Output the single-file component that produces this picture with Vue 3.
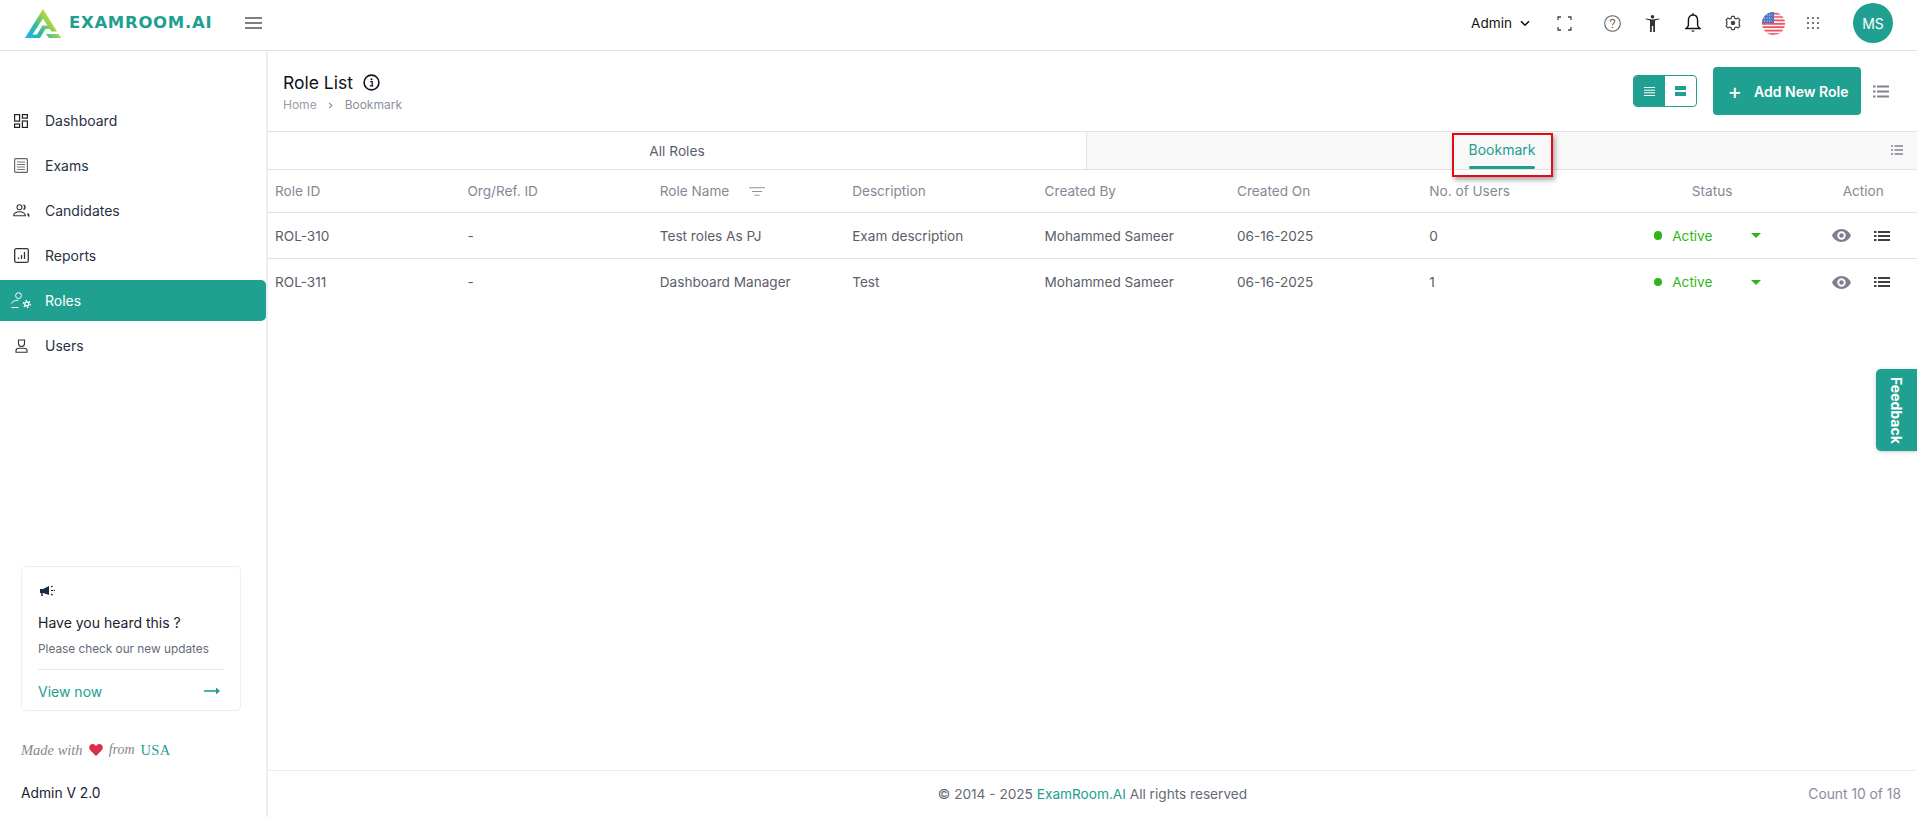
<script setup>
const cols = ['Role ID', 'Org/Ref. ID', 'Role Name', 'Description', 'Created By', 'Created On', 'No. of Users']
const rows = [
  ['ROL-310', '-', 'Test roles As PJ', 'Exam description', 'Mohammed Sameer', '06-16-2025', '0'],
  ['ROL-311', '-', 'Dashboard Manager', 'Test', 'Mohammed Sameer', '06-16-2025', '1'],
]
const nav = ['Dashboard', 'Exams', 'Candidates', 'Reports', 'Roles', 'Users']
</script>

<template>
  <div class="page">
    <header class="top">
      <div class="brand">
        <svg class="logo" width="36" height="29" viewBox="0 0 36 29">
          <defs>
            <linearGradient id="lg" gradientUnits="userSpaceOnUse" x1="2" y1="29" x2="30" y2="8">
              <stop offset="0" stop-color="#1fb5e6" />
              <stop offset="0.4" stop-color="#2db9a0" />
              <stop offset="0.85" stop-color="#b9d93a" />
            </linearGradient>
          </defs>
          <path fill="url(#lg)" d="M18 0 32 22.500H26.500L18 9.500 7.500 25.500H12L17.500 16.500H24L26.500 20H20.500L15 29H0Z" />
          <path fill="url(#lg)" d="M21 25H33.500L36 29H24Z" />
        </svg>
        <span class="wordmark">EXAMROOM.AI</span>
      </div>
      <svg class="burger" width="17" height="12" viewBox="0 0 17 12"><path d="M0 1H17M0 6H17M0 11H17" stroke="#555" stroke-width="1.500" /></svg>
      <div class="spacer"></div>
      <div class="tools">
        <span class="admin">Admin</span>
        <svg class="chev" width="10" height="7" viewBox="0 0 10 7"><path d="M1 1.200 5 5.200 9 1.200" fill="none" stroke="#111" stroke-width="1.600" /></svg>
        <svg class="t-full" width="15" height="15" viewBox="0 0 15 15"><path d="M1 4V1H4M11 1H14V4M14 11V14H11M4 14H1V11" fill="none" stroke="#444" stroke-width="1.300" /></svg>
        <svg class="t-help" width="17" height="17" viewBox="0 0 17 17"><circle cx="8.500" cy="8.500" r="7.800" fill="none" stroke="#5a5f6b" stroke-width="1.100" /><path d="M6.200 6.600C6.300 5.200 7.300 4.400 8.500 4.400 9.900 4.400 10.800 5.300 10.800 6.500 10.800 8 8.500 8.200 8.500 10.200" fill="none" stroke="#8a6d4b" stroke-width="1.100" /><circle cx="8.500" cy="12.500" r=".8" fill="#8a6d4b" /></svg>
        <svg class="t-access" width="15" height="17" viewBox="0 0 15 17"><circle cx="7.500" cy="1.800" r="1.800" fill="#333" /><path d="M.5 4.200 5 5.600V17H6.800V11H8.200V17H10V5.600L14.500 4.200 14.200 3.400 7.500 4.500 .8 3.400Z" fill="#333" /></svg>
        <svg class="t-bell" width="16" height="20" viewBox="0 0 16 20"><path d="M8 2C4.700 2 3.400 4.500 3.400 7.500V12C3.400 13.500 2.300 14.600 1 15.500H15C13.700 14.600 12.600 13.500 12.600 12V7.500C12.600 4.500 11.300 2 8 2Z" fill="none" stroke="#111" stroke-width="1.400" /><path d="M8 .3V2" stroke="#111" stroke-width="1.400" /><path d="M6.300 17.500H9.700A1.800 1.800 0 0 1 6.300 17.500Z" fill="#111" /></svg>
        <svg class="t-gear" width="16" height="16" viewBox="0 0 24 24"><path fill="none" stroke="#444" stroke-width="1.800" stroke-linejoin="round" d="M10 2h4l.7 3 2.200 1 2.700-1.500 2.800 2.800L20.900 10l.9 2-.9 2 1.500 2.700-2.800 2.800L17 18l-2.300 1-.7 3h-4l-.7-3L7 18l-2.600 1.500-2.800-2.800L3.100 14l-.9-2 .9-2L1.600 7.300l2.800-2.800L7 6l2.300-1z" /><circle cx="12" cy="12" r="3.400" fill="#444" /></svg>
        <svg class="t-flag" width="23" height="23" viewBox="0 0 23 23">
          <defs><clipPath id="fc"><circle cx="11.500" cy="11.500" r="11.500" /></clipPath></defs>
          <g clip-path="url(#fc)">
            <rect width="23" height="23" fill="#f4f4f6" />
            <path d="M0 1.600H23M0 5H23M0 8.400H23M0 11.800H23M0 15.200H23M0 18.600H23M0 22H23" stroke="#ef5360" stroke-width="1.700" />
            <rect width="12" height="11" fill="#4a76c9" />
            <path d="M2 3h8M2 6h8M2 9h8" stroke="#dfe8fa" stroke-width="1" stroke-dasharray="1 1.500" />
          </g>
        </svg>
        <svg class="t-grid" width="14" height="14" viewBox="0 0 14 14"><g fill="#555"><circle cx="2" cy="2" r="1.100" /><circle cx="7" cy="2" r="1.100" /><circle cx="12" cy="2" r="1.100" /><circle cx="2" cy="7" r="1.100" /><circle cx="7" cy="7" r="1.100" /><circle cx="12" cy="7" r="1.100" /><circle cx="2" cy="12" r="1.100" /><circle cx="7" cy="12" r="1.100" /><circle cx="12" cy="12" r="1.100" /></g></svg>
        <div class="avatar">MS</div>
      </div>
    </header>

    <div class="body">
      <aside class="side">
        <nav class="nav">
          <div v-for="n in nav" :key="n" class="nav-item" :class="{ on: n === 'Roles' }">
            <span class="nav-ic">
              <svg v-if="n === 'Dashboard'" width="14" height="14" viewBox="0 0 14 14" fill="none" stroke="#222" stroke-width="1.200"><rect x=".6" y=".6" width="5" height="6.500" /><rect x="8.400" y=".6" width="5" height="3.500" /><rect x=".6" y="10" width="5" height="3.400" /><rect x="8.400" y="7" width="5" height="6.400" /></svg>
              <svg v-else-if="n === 'Exams'" width="14" height="15" viewBox="0 0 14 15" fill="none" stroke="#666"><rect x=".6" y=".6" width="12.800" height="13.800" rx="1" stroke-width="1.200" /><path d="M3 4H11M3 6.500H11M3 9H11M3 11.500H11" stroke-width=".9" /></svg>
              <svg v-else-if="n === 'Candidates'" width="17" height="13" viewBox="0 0 17 13" fill="none" stroke="#333" stroke-width="1.100"><circle cx="6.500" cy="3.200" r="2.500" /><path d="M10.500 .9A2.500 2.500 0 0 1 10.500 5.500" stroke-width="1.500" /><path d="M.7 11.800C.7 8.500 3.500 7.700 6.500 7.700S12 9 12.500 11.800Z" /><path d="M14.800 9.500 16 12.500" stroke-width="1.800" /></svg>
              <svg v-else-if="n === 'Reports'" width="15" height="15" viewBox="0 0 15 15" fill="none" stroke="#333"><rect x=".7" y=".7" width="13.600" height="13.600" rx="1.500" stroke-width="1.300" /><path d="M4.500 11V9.500M7.500 11V7M10.500 11V4" stroke-width="1.300" /></svg>
              <svg v-else-if="n === 'Roles'" width="20" height="17" viewBox="0 0 20 17" fill="none" stroke="#fff"><circle cx="7.500" cy="3.600" r="2.900" stroke-width="1" /><path d="M.5 11.500C1 9.500 3.500 8.500 7.500 8.200M.5 15.500H7.500" stroke-width="1" /><circle cx="15.800" cy="12" r="2" stroke-width="1.300" /><circle cx="15.800" cy="12" r="3.500" stroke-width="1.200" stroke-dasharray="1.500 2.170" /></svg>
              <svg v-else width="13" height="14" viewBox="0 0 13 14" fill="none" stroke="#333" stroke-width="1.100"><path d="M3.500 1H9.500V4.500A3 3 0 0 1 3.500 4.500Z" /><path d="M1 13.300V11.500C1 10 2.500 9.300 4 9.300H9C10.500 9.300 12 10 12 11.500V13.300Z" /></svg>
            </span>
            <span class="nav-tx">{{ n }}</span>
          </div>
        </nav>
        <div class="grow"></div>
        <div class="card">
          <svg class="mega" width="16" height="13" viewBox="0 0 16 13"><path d="M0 4H3L9 1V10L3 8H2.500L3 11H1.500L1 8H0Z" fill="#1d2b45" /><path d="M11 5.500H15M11 2 13 .8M11 9 13 10.500" stroke="#1d2b45" stroke-width="1.200" stroke-dasharray="2 .6" /></svg>
          <div class="c-title">Have you heard this ?</div>
          <div class="c-sub">Please check our new updates</div>
          <div class="c-foot">
            <span class="c-link">View now</span>
            <svg width="16" height="8" viewBox="0 0 16 8"><path d="M0 4H14" stroke="#20a090" stroke-width="1.600" /><path d="M12 .6 16 4 12 7.400Z" fill="#20a090" /></svg>
          </div>
        </div>
        <div class="made">
          <span class="script">Made with</span>
          <svg width="14" height="12" viewBox="0 0 14 12"><path d="M7 12 1 6C-1 3 1 0 3.700 0 5 0 6.300.7 7 2 7.700.7 9 0 10.300 0 13 0 15 3 13 6Z" fill="#d92f47" /></svg>
          <span class="script">from</span>
          <span class="usa">USA</span>
        </div>
        <div class="ver">Admin V 2.0</div>
      </aside>

      <main class="main">
        <section class="head">
          <div class="head-l">
            <div class="title-row">
              <h1 class="title">Role List</h1>
              <svg width="17" height="17" viewBox="0 0 17 17"><circle cx="8.500" cy="8.500" r="7.400" fill="none" stroke="#0d1220" stroke-width="1.600" /><circle cx="8.500" cy="5.300" r="1" fill="#0d1220" /><path d="M7.300 7.600H9.200V11.600H10.200M6.900 11.900H10.200" stroke="#0d1220" stroke-width="1.200" fill="none" /></svg>
            </div>
            <div class="crumb"><span>Home</span><svg width="6" height="7" viewBox="0 0 6 7"><path d="M1 .8 4 3.500 1 6.200" fill="none" stroke="#8b8f9c" stroke-width="1.100" /></svg><span class="c2">Bookmark</span></div>
          </div>
          <div class="head-r">
            <div class="toggle">
              <span class="tg on"><svg width="11" height="9" viewBox="0 0 11 9"><path d="M0 .5H11M0 3.200H11M0 5.800H11M0 8.500H11" stroke="#fff" stroke-width="1" /></svg></span>
              <span class="tg"><svg width="11" height="10" viewBox="0 0 11 10"><rect width="11" height="4" fill="#20a090" /><rect y="6" width="11" height="4" fill="#20a090" /></svg></span>
            </div>
            <button class="add"><span class="plus">+</span>Add New Role</button>
            <svg class="list-ic" width="16" height="13" viewBox="0 0 16 13"><path d="M0 1.500H2.500M4 1.500H16M0 6.500H2.500M4 6.500H16M0 11.500H2.500M4 11.500H16" stroke="#7f8291" stroke-width="1.900" /></svg>
          </div>
        </section>

        <section class="tabs">
          <div class="tab">All Roles</div>
          <div class="tab alt">
            <span class="bm">Bookmark<i class="bm-line"></i></span>
            <svg class="tab-ic" width="12" height="10" viewBox="0 0 12 10"><path d="M0 1H2M3.500 1H12M0 5H2M3.500 5H12M0 9H2M3.500 9H12" stroke="#7f8291" stroke-width="1.500" /></svg>
          </div>
        </section>

        <section class="table">
          <div class="tr th">
            <div v-for="c in cols" :key="c" class="td">{{ c }}
              <svg v-if="c === 'Role Name'" class="filter" width="16" height="9" viewBox="0 0 16 9"><path d="M0 .7H16M3 4.500H13M5.500 8.300H10.500" stroke="#8f93a0" stroke-width="1.100" /></svg>
            </div>
            <div class="td ctr">Status</div>
            <div class="td ctr act-h">Action</div>
          </div>
          <div v-for="r in rows" :key="r[0]" class="tr body-row">
            <div v-for="(v, i) in r" :key="i" class="td">{{ v }}</div>
            <div class="td st">
              <i class="dot"></i><span class="st-tx">Active</span><i class="caret"></i>
            </div>
            <div class="td acts">
              <svg width="19" height="13" viewBox="0 0 19 13"><path fill-rule="evenodd" d="M9.500 0C14 0 17.500 3 19 6.500 17.500 10 14 13 9.500 13S1.500 10 0 6.500C1.500 3 5 0 9.500 0ZM9.500 2.300A4.200 4.200 0 1 0 9.500 10.700 4.200 4.200 0 0 0 9.500 2.300Z" fill="#7d808f" /><circle cx="9.500" cy="6.500" r="2.300" fill="#7d808f" /></svg>
              <svg width="16" height="10" viewBox="0 0 16 10"><path d="M0 1H2.500M4 1H16M0 5H2.500M4 5H16M0 9H2.500M4 9H16" stroke="#000" stroke-width="1.700" /></svg>
            </div>
          </div>
        </section>
        <div class="grow"></div>
        <footer class="foot">
          <div class="f-c">© 2014 - 2025 <span class="teal">ExamRoom.AI</span> All rights reserved</div>
          <div class="f-r">Count 10 of 18</div>
        </footer>
      </main>
    </div>

    <div class="redbox"></div>
    <div class="feedback"><span>Feedback</span></div>
  </div>
</template>

<style>
html, body { margin: 0; padding: 0; background: #fff; }
</style>

<style scoped>
.page { position: relative; width: 1917px; height: 817px; overflow: hidden; font-family: Inter, "Noto Sans", sans-serif; display: flex; flex-direction: column; background: #fff; }
.top { height: 51px; flex: none; display: flex; align-items: center; border-bottom: 1px solid #dde2e8; box-sizing: border-box; padding-bottom: 4px; }
.brand { display: flex; align-items: center; margin-left: 25px; }
.wordmark { margin-left: 8px; width: 140px; color: #1f9f90; font: 700 16.500px/1 "DejaVu Sans", sans-serif; letter-spacing: .7px; white-space: nowrap; }
.burger { margin-left: 36px; }
.spacer { flex: 1; }
.tools { display: flex; align-items: center; height: 100%; }
.admin { font-size: 13.600px; color: #111; margin-right: 8px; }
.chev { margin-right: 27px; }
.t-full { margin-right: 32px; }
.t-help { margin-right: 24px; }
.t-access { margin-right: 25px; }
.t-bell { margin-right: 24px; }
.t-gear { margin-right: 21px; }
.t-flag { margin-right: 21px; }
.t-grid { margin-right: 33px; }
.avatar { width: 40px; height: 40px; border-radius: 50%; background: #20a090; color: #fff; font-size: 14px; display: flex; align-items: center; justify-content: center; margin-right: 24px; }

.body { flex: 1; display: flex; min-height: 0; }
.side { width: 268px; flex: none; box-sizing: border-box; border-right: 2px solid #edeef2; display: flex; flex-direction: column; }
.nav { margin-top: 49px; display: flex; flex-direction: column; gap: 4px; }
.nav-item { height: 41px; display: flex; align-items: center; border-radius: 0 5px 5px 0; color: #2a3145; font-size: 14px; }
.nav-item.on { background: #20a090; color: #fff; }
.nav-ic { width: 42px; margin-right: 3px; flex: none; display: flex; justify-content: center; }
.grow { flex: 1; }
.card { margin-left: 21px; width: 220px; height: 145px; box-sizing: border-box; border: 1px solid #eceef2; border-radius: 5px; padding: 18px 16px 0 16px; }
.mega { display: block; margin-left: 2px; }
.c-title { margin-top: 16px; font-size: 14px; color: #1a2030; line-height: 17px; }
.c-sub { margin-top: 11px; font-size: 11.800px; color: #666b78; line-height: 14px; }
.c-foot { margin-top: 13px; border-top: 1px solid #e6e8ec; display: flex; justify-content: space-between; align-items: center; height: 42px; padding-right: 4px; }
.c-link { font-size: 14px; color: #20a090; }
.made { margin: 29px 0 0 21px; display: flex; align-items: center; gap: 6px; height: 20px; }
.script { font: italic 14.500px "Liberation Serif", serif; color: #888; }
.script + svg + .script { font-size: 14px; }
.usa { font: 14.500px "Liberation Serif", serif; color: #20a090; letter-spacing: .3px; }
.ver { margin: 26px 0 0 21px; height: 31px; line-height: 14px; font-size: 13.800px; color: #1a2030; }

.main { flex: 1; min-width: 0; display: flex; flex-direction: column; }
.head { height: 80px; flex: none; display: flex; justify-content: space-between; box-sizing: border-box; }
.head-l { padding: 19px 0 0 15px; }
.title-row { display: flex; align-items: center; gap: 10px; height: 24px; }
.title { margin: 0; font-size: 17.500px; font-weight: 400; color: #0d1220; }
.crumb { margin-top: 4px; display: flex; align-items: center; gap: 11px; font-size: 12px; color: #9a9eab; line-height: 14px; }
.c2 { color: #8b8f9c; }
.head-r { display: flex; align-items: center; padding-right: 28px; height: 48px; margin-top: 16px; }
.toggle { width: 64px; height: 32px; display: flex; box-sizing: border-box; border: 1px solid #20a090; border-radius: 4px; overflow: hidden; margin-right: 16px; }
.tg { flex: 1; display: flex; align-items: center; justify-content: center; }
.tg.on { background: #20a090; }
.add { width: 148px; height: 48px; border: 0; border-radius: 4px; background: #20a090; color: #fff; font: 600 14px Inter, sans-serif; display: flex; align-items: center; justify-content: center; gap: 12px; margin-right: 12px; padding: 0 0 0 2px; }
.plus { font-size: 22px; font-weight: 400; line-height: 1; }

.tabs { height: 39px; flex: none; display: flex; border-top: 1px solid #e0e2e8; border-bottom: 1px solid #e0e2e8; box-sizing: border-box; }
.tab { display: flex; align-items: center; justify-content: center; font-size: 13.700px; color: #5c606c; position: relative; }
.tab:first-child { width: 818px; flex: none; }
.tab.alt { flex: 1; background: #f8f8f9; border-left: 1px solid #e4e5ea; color: #20a090; box-sizing: border-box; }
.bm { position: relative; height: 37px; line-height: 36px; font-size: 14px; }
.bm-line { position: absolute; left: 0; right: 0; bottom: 0; height: 3px; border-radius: 2px; background: #20a090; }
.tab-ic { position: absolute; right: 14px; top: 13px; }

.tr { display: grid; grid-template-columns: repeat(7, 192.400px) 194.700px 1fr; height: 46px; align-items: center; border-bottom: 1px solid #e0e2e8; box-sizing: border-box; font-size: 13.600px; color: #5a5e69; }
.tr.th { height: 43px; color: #858995; }
.body-row:last-child { border-bottom: 0; }
.td { padding-left: 7px; display: flex; align-items: center; white-space: nowrap; }
.td.ctr { padding-left: 0; justify-content: center; }
.filter { margin-left: 20px; }
.st { padding-left: 39px; }
.dot { width: 8.500px; height: 8.500px; border-radius: 50%; background: #2fb616; margin-right: 10px; flex: none; }
.st-tx { color: #2fb616; width: 79px; }
.caret { width: 0; height: 0; border: 5px solid transparent; border-top: 5px solid #2fb616; border-bottom: 0; }
.acts { gap: 23px; padding-left: 23px; }

.foot { height: 47px; flex: none; border-top: 1px solid #eceef0; display: flex; align-items: center; position: relative; box-sizing: border-box; font-size: 13.650px; color: #666a76; }
.f-c { width: 100%; text-align: center; }
.teal { color: #20a090; }
.f-r { position: absolute; right: 16px; white-space: nowrap; font-size: 13.800px; color: #8a8d9b; }

.redbox { position: absolute; left: 1452px; top: 133px; width: 101px; height: 44px; box-sizing: border-box; border: 2px solid #e20d13; box-shadow: 2px 3px 5px rgba(0,0,0,.35); }
.feedback { position: absolute; right: 0; top: 369px; width: 41px; height: 82px; background: #20a090; border-radius: 5px 0 0 5px; box-shadow: 0 1px 4px rgba(0,0,0,.2); display: flex; align-items: center; justify-content: center; }
.feedback span { writing-mode: vertical-rl; color: #fff; font-weight: 700; font-size: 14px; }
</style>
